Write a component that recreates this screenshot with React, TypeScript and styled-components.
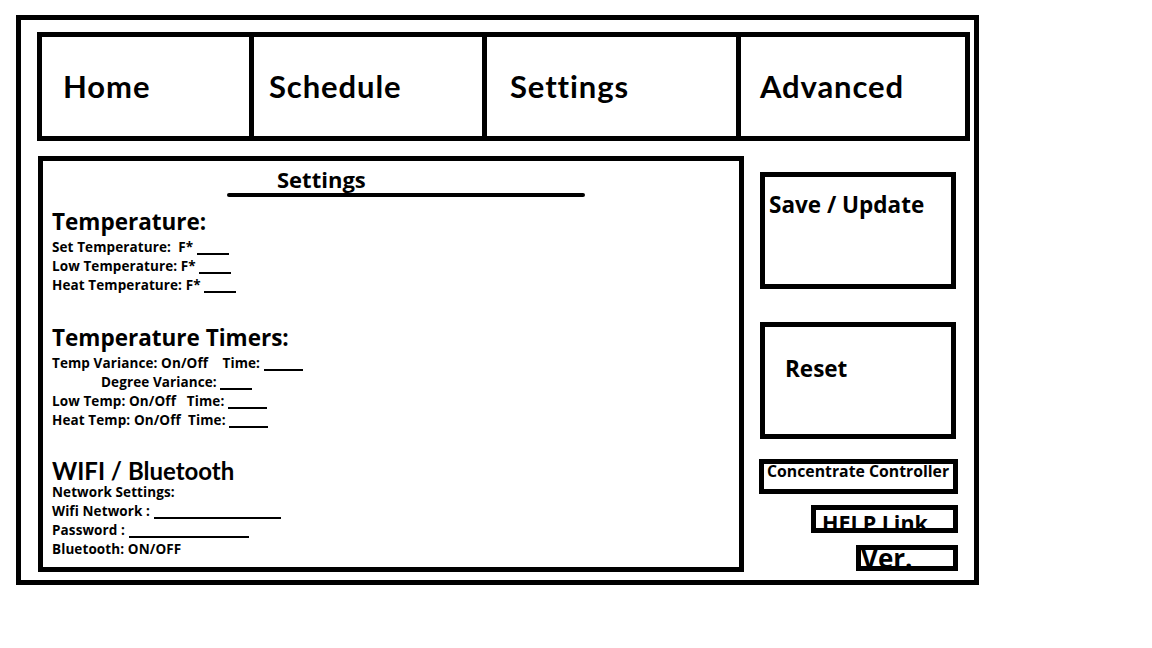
import React from 'react';
import styled, { createGlobalStyle } from 'styled-components';

const GlobalStyle = createGlobalStyle`
  html, body {
    margin: 0;
    padding: 0;
    background: #fff;
  }
  body {
    font-family: 'Open Sans', Lato, sans-serif;
    font-weight: 700;
    color: #000;
  }
`;

const Frame = styled.div`
  box-sizing: border-box;
  width: 963px;
  height: 570px;
  margin: 15px 0 0 16px;
  border: 5px solid #000;
  padding: 12px 4px 8px 16px;
  display: flex;
  flex-direction: column;
`;

const NavBar = styled.nav`
  display: flex;
  box-sizing: border-box;
  height: 109px;
  border: 5px solid #000;
`;

const NavCell = styled.div<{ $w: number; $pad: number }>`
  box-sizing: border-box;
  flex: none;
  width: ${(p) => p.$w}px;
  display: flex;
  align-items: center;
  padding: 0 0 2px ${(p) => p.$pad}px;
  font-family: Lato, 'Open Sans', sans-serif;
  font-size: 31px;
  letter-spacing: 0.9px;
  & + & {
    border-left: 5px solid #000;
  }
`;

const Body = styled.div`
  display: flex;
  gap: 15px;
  margin: 15px 0 0 1px;
`;

const Panel = styled.section`
  box-sizing: border-box;
  width: 706px;
  height: 416px;
  border: 5px solid #000;
  padding: 5px 0 0 9px;
  display: flex;
  flex-direction: column;
`;

const PanelTitle = styled.div`
  font-size: 22px;
  line-height: 26px;
  margin-left: 225px;
`;

const TitleRule = styled.div`
  width: 358px;
  height: 4px;
  border-radius: 2px;
  background: #000;
  margin: 1px 0 0 175px;
`;

const Heading = styled.div<{ $size: number; $lh: number; $mt: number; $lato?: boolean }>`
  font-family: ${(p) => (p.$lato ? "Lato, 'Open Sans', sans-serif" : "'Open Sans', Lato, sans-serif")};
  font-size: ${(p) => p.$size}px;
  line-height: ${(p) => p.$lh}px;
  margin-top: ${(p) => p.$mt}px;
`;

const Field = styled.div<{ $indent?: number; $mt?: number }>`
  font-size: 13.5px;
  letter-spacing: 0.1px;
  line-height: 19px;
  white-space: pre;
  padding-left: ${(p) => p.$indent || 0}px;
  margin-top: ${(p) => p.$mt || 0}px;
`;

const Blank = styled.span<{ $w: number }>`
  display: inline-block;
  width: ${(p) => p.$w}px;
  border-bottom: 2px solid #000;
  margin-bottom: -3px;
`;

const SideCol = styled.aside`
  width: 199px;
  display: flex;
  flex-direction: column;
  align-items: flex-end;
`;

const ActionBox = styled.div<{ $mt: number; $pt: number; $pl: number }>`
  box-sizing: border-box;
  width: 196px;
  height: 117px;
  margin: ${(p) => p.$mt}px 2px 0 0;
  border: 5px solid #000;
  padding: ${(p) => p.$pt}px 0 0 ${(p) => p.$pl}px;
  font-size: 22.5px;
  line-height: 26px;
`;

const TagBox = styled.div<{
  $w: number;
  $h: number;
  $mt: number;
  $size: number;
  $lh: number;
  $pl: number;
}>`
  box-sizing: border-box;
  width: ${(p) => p.$w}px;
  height: ${(p) => p.$h}px;
  margin-top: ${(p) => p.$mt}px;
  border: 5px solid #000;
  padding-left: ${(p) => p.$pl}px;
  font-size: ${(p) => p.$size}px;
  line-height: ${(p) => p.$lh}px;
  white-space: nowrap;
  overflow: hidden;
`;

const navItems = [
  { label: 'Home', w: 207, pad: 21 },
  { label: 'Schedule', w: 233, pad: 15 },
  { label: 'Settings', w: 254, pad: 23 },
  { label: 'Advanced', w: 229, pad: 19 },
];

const App: React.FC = () => {
  return (
    <>
      <GlobalStyle />
      <Frame>
        <NavBar>
          {navItems.map((item) => (
            <NavCell key={item.label} $w={item.w} $pad={item.pad}>
              {item.label}
            </NavCell>
          ))}
        </NavBar>
        <Body>
          <Panel>
            <PanelTitle>Settings</PanelTitle>
            <TitleRule />

            <Heading $size={22.5} $lh={28} $mt={11}>Temperature:</Heading>
            <Field $mt={2}>
              {'Set Temperature:  F* '}
              <Blank $w={32} />
            </Field>
            <Field>
              {'Low Temperature: F* '}
              <Blank $w={32} />
            </Field>
            <Field>
              {'Heat Temperature: F* '}
              <Blank $w={32} />
            </Field>

            <Heading $size={22.5} $lh={28} $mt={29}>Temperature Timers:</Heading>
            <Field $mt={2}>
              {'Temp Variance: On/Off    Time: '}
              <Blank $w={39} />
            </Field>
            <Field $indent={49}>
              {'Degree Variance: '}
              <Blank $w={32} />
            </Field>
            <Field>
              {'Low Temp: On/Off   Time: '}
              <Blank $w={39} />
            </Field>
            <Field>
              {'Heat Temp: On/Off  Time: '}
              <Blank $w={39} />
            </Field>

            <Heading $size={24} $lh={22} $mt={30} $lato>WIFI / Bluetooth</Heading>
            <Field $mt={1}>Network Settings:</Field>
            <Field>
              {'Wifi Network : '}
              <Blank $w={127} />
            </Field>
            <Field>
              {'Password : '}
              <Blank $w={120} />
            </Field>
            <Field>Bluetooth: ON/OFF</Field>
          </Panel>

          <SideCol>
            <ActionBox $mt={16} $pt={15} $pl={4}>Save / Update</ActionBox>
            <ActionBox $mt={33} $pt={29} $pl={20}>Reset</ActionBox>
            <TagBox $w={199} $h={35} $mt={20} $size={15.8} $lh={14} $pl={3}>
              Concentrate Controller
            </TagBox>
            <TagBox $w={147} $h={28} $mt={11} $size={21.5} $lh={25} $pl={6}>
              HELP Link
            </TagBox>
            <TagBox $w={102} $h={26} $mt={12} $size={26} $lh={17} $pl={0}>
              Ver.
            </TagBox>
          </SideCol>
        </Body>
      </Frame>
    </>
  );
};

export default App;
